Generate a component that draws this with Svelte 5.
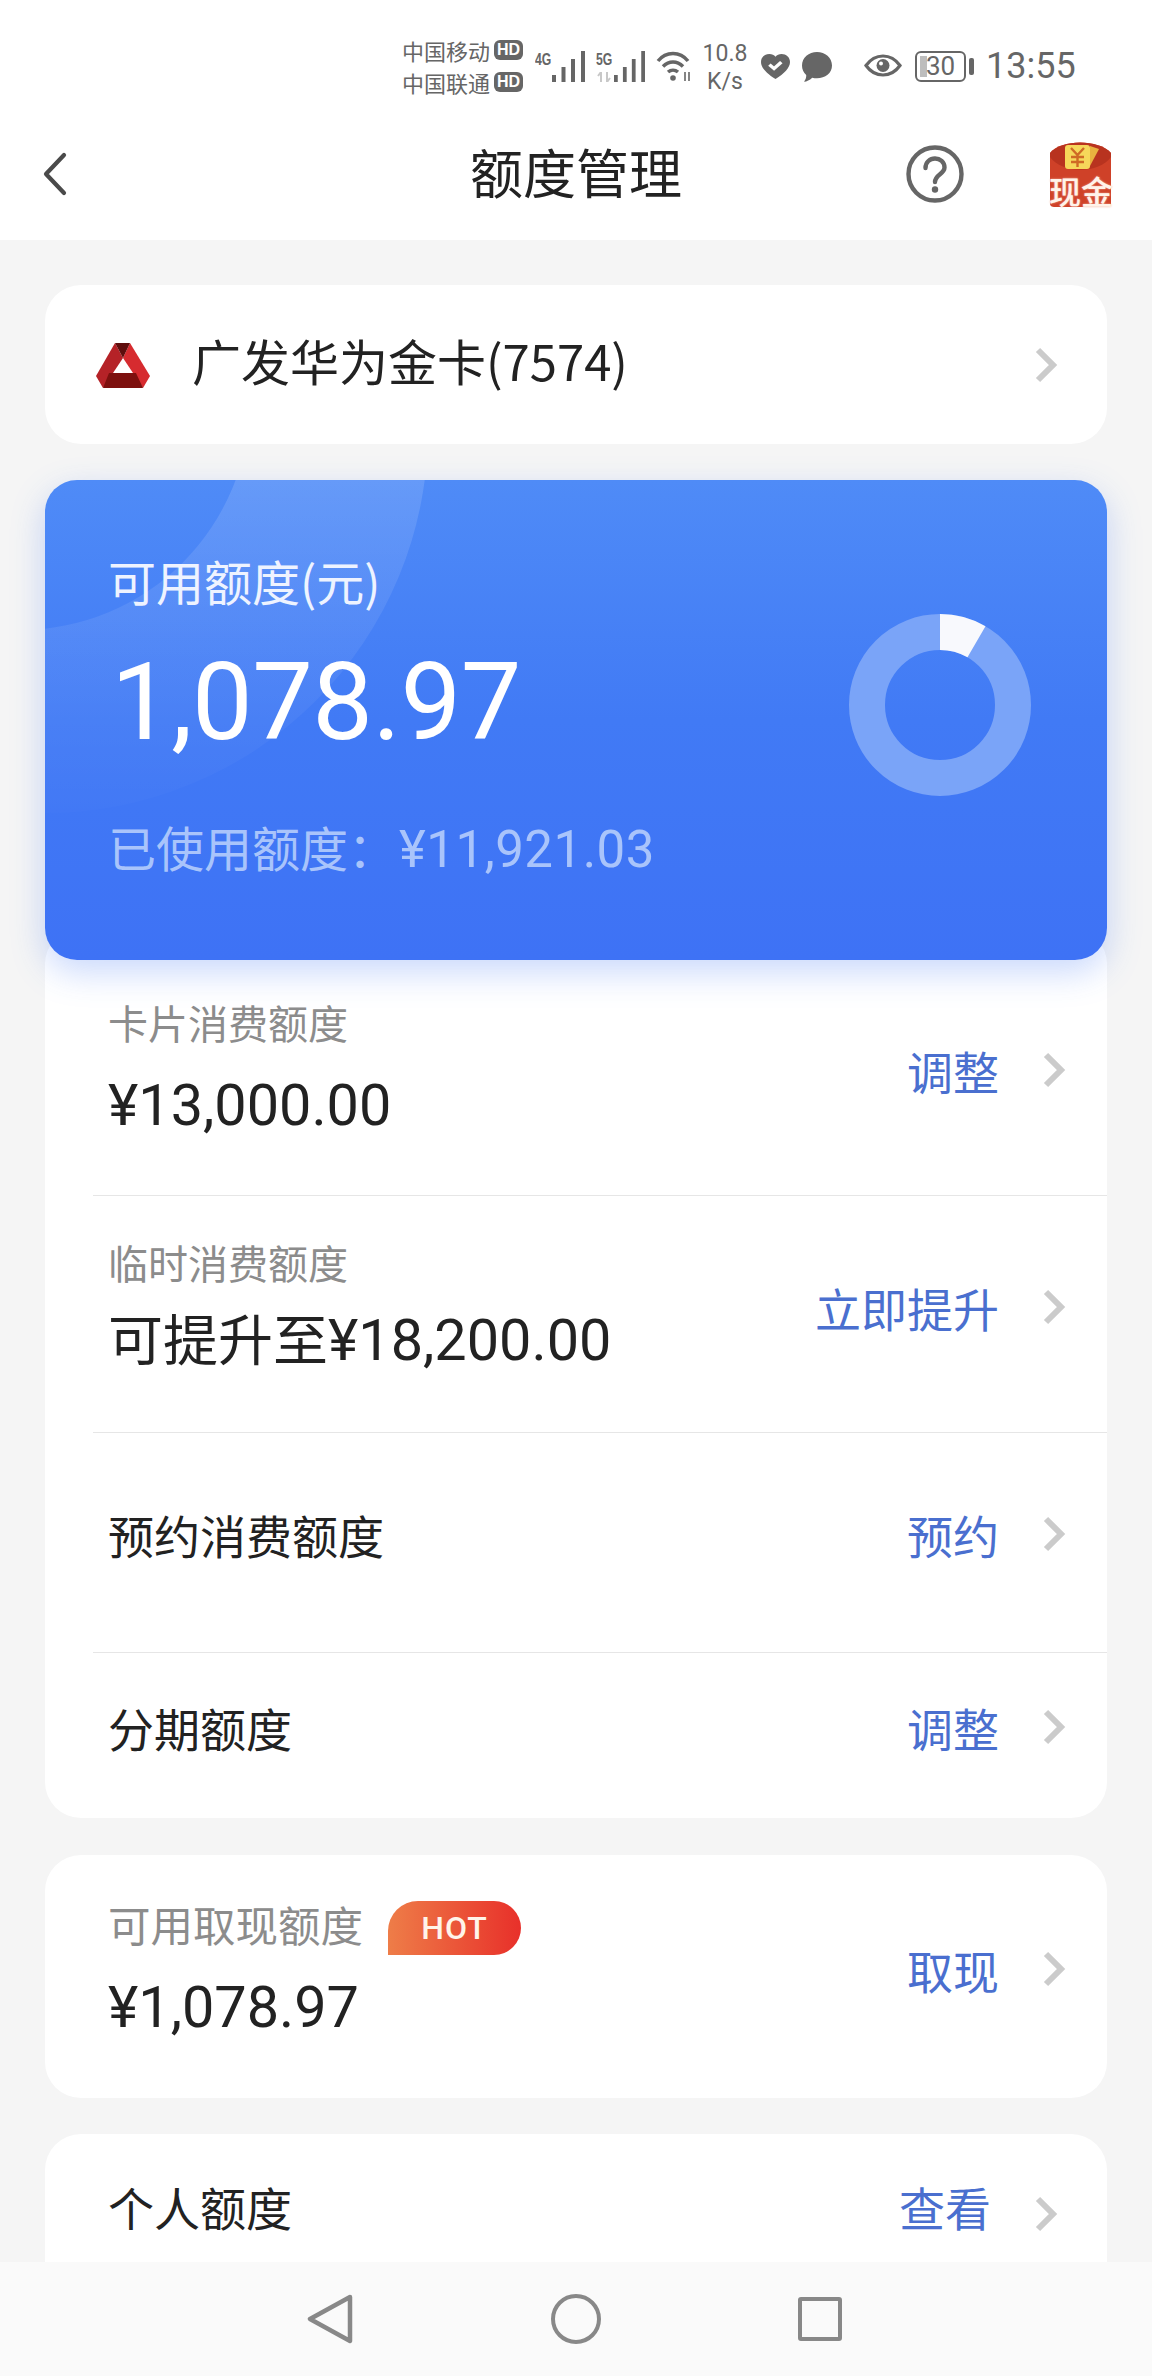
<script lang="ts">
type Row = {
  label: string;
  prefix?: string;
  value?: string;
  action: string;
  plain?: boolean;
  cls: string;
};

const rows: Row[] = [
  { label: '卡片消费额度', value: '¥13,000.00', action: '调整', cls: 'r1' },
  { label: '临时消费额度', prefix: '可提升至', value: '¥18,200.00', action: '立即提升', cls: 'r2' },
  { label: '预约消费额度', action: '预约', plain: true, cls: 'r3' },
  { label: '分期额度', action: '调整', plain: true, cls: 'r4' },
];

// donut slice: used share, drawn from 12 o'clock
function slice(cx: number, cy: number, r0: number, r1: number, deg: number) {
  const a = (deg * Math.PI) / 180;
  const sx = Math.sin(a);
  const cs = Math.cos(a);
  return `M${cx} ${cy - r1}A${r1} ${r1} 0 0 1 ${cx + r1 * sx} ${cy - r1 * cs}L${cx + r0 * sx} ${cy - r0 * cs}A${r0} ${r0} 0 0 0 ${cx} ${cy - r0}Z`;
}

function circle(cx: number, cy: number, r: number) {
  return `M${cx - r} ${cy}a${r} ${r} 0 1 0 ${r * 2} 0a${r} ${r} 0 1 0 ${-r * 2} 0Z`;
}
</script>

{#snippet chevron()}
	<svg class="chev" viewBox="0 0 24 36" aria-hidden="true">
		<path d="M3 3l15 15L3 33" fill="none" stroke="#cbcbcb" stroke-width="6" />
	</svg>
{/snippet}

{#snippet bars(w = 33)}
	<svg class="sig" style="width: {w}px" viewBox="0 0 33 31" preserveAspectRatio="none" aria-hidden="true">
		<g fill="#666">
			<rect x="0" y="24" width="4" height="7" />
			<rect x="9.500" y="16" width="4" height="15" />
			<rect x="19" y="8" width="4" height="23" />
			<rect x="29" y="0" width="4" height="31" />
		</g>
	</svg>
{/snippet}

<div class="screen">
	<div class="status">
		<div class="carriers">
			<div class="carrier">中国移动<span class="hd">HD</span></div>
			<div class="carrier">中国联通<span class="hd">HD</span></div>
		</div>
		<div class="net">
			<span class="g">4G</span>
			{@render bars(33)}
			<div class="g5">
				<span class="g">5G</span>
				<svg class="updown" viewBox="0 0 16 10" aria-hidden="true">
					<path d="M5 10V0L2 4M11 0v10l3-4" fill="none" stroke="#c8c8c8" stroke-width="2" />
				</svg>
			</div>
			{@render bars(31)}
		</div>
		<svg class="wifi" viewBox="0 0 35 30" aria-hidden="true">
			<g fill="none" stroke="#666" stroke-width="3.500">
				<path d="M2 10C10 0 24 0 32 10" />
				<path d="M7 15.500C13 9.500 21 9.500 27 15.500" />
				<path d="M12 21C15 18.500 19 18.500 22 21" />
			</g>
			<circle cx="17" cy="27" r="2.800" fill="#666" />
			<path d="M29 21v9M33 21v9" stroke="#666" stroke-width="1.600" />
		</svg>
		<div class="speed"><span>10.8</span><span>K/s</span></div>
		<svg class="heart" viewBox="0 0 20 20" preserveAspectRatio="none" aria-hidden="true">
			<path d="M10 20C4 15.500 0 11 0 6.300 0 2.500 2.700 0 5.800 0 7.600 0 9 .8 10 2.200 11 .8 12.400 0 14.200 0 17.300 0 20 2.500 20 6.300 20 11 16 15.500 10 20Z" fill="#666" />
			<path d="M5.800 8.500l3.200 3.200 5-5.200" fill="none" stroke="#fff" stroke-width="2.400" />
		</svg>
		<svg class="chat" viewBox="0 0 22 24" preserveAspectRatio="none" aria-hidden="true">
			<path d="M11 0C17 0 22 4.500 22 10.800 22 17 17 21 11 21 9.800 21 8.600 20.800 7.500 20.500 5.500 22.500 3.500 23.500 1.500 23.800 2.700 22 3.200 20.300 3.100 18.400 1.100 16.500 0 14 0 10.800 0 4.500 5 0 11 0Z" fill="#666" />
		</svg>
		<svg class="eye" viewBox="0 0 38 23" aria-hidden="true">
			<path d="M2 11.500C7 4.500 13 2 19 2S31 4.500 36 11.500C31 18.500 25 21 19 21S7 18.500 2 11.500Z" fill="none" stroke="#666" stroke-width="3.200" />
			<circle cx="19" cy="11.500" r="6.500" fill="#666" />
			<circle cx="17" cy="9.500" r="2" fill="#fff" />
		</svg>
		<div class="battery"><span class="level"></span><span class="pct">30</span></div>
		<span class="cap"></span>
		<span class="clock">13:55</span>
	</div>

	<header class="topbar">
		<button type="button" class="back" aria-label="返回">
			<svg viewBox="0 0 26 44" aria-hidden="true">
				<path d="M22 3L4 22l18 19" fill="none" stroke="#4a4a4a" stroke-width="4.200" stroke-linecap="round" stroke-linejoin="round" />
			</svg>
		</button>
		<h1>额度管理</h1>
		<svg class="help" viewBox="0 0 58 58" aria-hidden="true">
			<circle cx="29" cy="29" r="26.500" fill="none" stroke="#666" stroke-width="4.400" />
			<path d="M19.500 23C19.500 17 24 13.500 29 13.500S38.500 17 38.500 22.500C38.500 29 29 29.500 29 37" fill="none" stroke="#666" stroke-width="4.400" stroke-linecap="round" />
			<circle cx="29" cy="44.500" r="3.200" fill="#666" />
		</svg>
		<div class="packet">
			<svg viewBox="0 0 64 66" aria-hidden="true">
				<path d="M1 11C12 -3 50 -3 62 11V62C62 64 60 65 58 65H5C3 65 1 64 1 62Z" fill="#cf4128" />
				<path d="M1 11C12 -3 50 -3 62 11V15C50 32 13 32 1 15Z" fill="#b8331f" />
				<path d="M41 4l9 3-9 17Z" fill="#e9b23f" />
				<rect x="16" y="3" width="25" height="24" rx="3" fill="#f6d75a" />
				<path d="M22 6l6.500 7L35 6M28.500 13v12M22 15h13M22 20h13" fill="none" stroke="#cf6a25" stroke-width="2.400" />
			</svg>
			<span>现金</span>
		</div>
	</header>

	<main class="content">
		<section class="card bank">
			<svg class="logo" viewBox="0 0 54 45" aria-hidden="true">
				<path d="M34 0L54 33 47 45 27 15Z" fill="#d62b2f" />
				<path d="M19 0L0 33 7 45 27 15Z" fill="#b52227" />
				<path d="M19 0h15l-7 15Z" fill="#5e0d0c" />
				<path d="M13 30h27l7 15H7Z" fill="#7d100e" />
			</svg>
			<span class="bank-name">广发华为金卡(7574)</span>
			{@render chevron()}
		</section>

		<section class="quota">
			<svg class="glow" viewBox="0 0 1062 480" aria-hidden="true">
				<defs>
					<linearGradient id="glow-fade" gradientUnits="userSpaceOnUse" x1="0" y1="0" x2="0" y2="360">
						<stop offset="0" stop-color="#fff" stop-opacity="0.13" />
						<stop offset="1" stop-color="#fff" stop-opacity="0" />
					</linearGradient>
				</defs>
				<path d={circle(0, -50, 383) + circle(-25, -80, 230)} fill-rule="evenodd" fill="url(#glow-fade)" />
			</svg>
			<div class="quota-text">
				<div class="q-label">可用额度(元)</div>
				<div class="q-amount">1,078.97</div>
				<div class="q-used">已使用额度：<span>¥11,921.03</span></div>
			</div>
			<svg class="donut" viewBox="0 0 184 184" aria-hidden="true">
				<circle cx="92" cy="92" r="73" fill="none" stroke="#7aa4f8" stroke-width="36" />
				<path d={slice(92, 92, 55, 91, 30)} fill="#f8f9fd" />
			</svg>
		</section>

		<section class="card list">
			{#each rows as row}
				<div class="row {row.cls}">
					<div class="row-text">
						{#if row.plain}
							<div class="plain">{row.label}</div>
						{:else}
							<div class="label">{row.label}</div>
							<div class="value">{#if row.prefix}<span class="prefix">{row.prefix}</span>{/if}{row.value}</div>
						{/if}
					</div>
					<span class="action">{row.action}</span>
					{@render chevron()}
				</div>
			{/each}
		</section>

		<section class="card cash">
			<div class="row-text">
				<div class="label">可用取现额度<span class="hot">HOT</span></div>
				<div class="value">¥1,078.97</div>
			</div>
			<span class="action">取现</span>
			{@render chevron()}
		</section>

		<section class="card personal">
			<div class="row-text"><div class="plain">个人额度</div></div>
			<span class="action">查看</span>
			{@render chevron()}
		</section>
	</main>

	<nav class="navbar">
		<svg class="nav-back" viewBox="0 0 46 50" aria-hidden="true">
			<path d="M43 3L3 25l40 22Z" fill="none" stroke="#888" stroke-width="4.500" stroke-linejoin="round" />
		</svg>
		<span class="nav-home"></span>
		<span class="nav-recent"></span>
	</nav>
</div>

<style>
	:global(body) {
		margin: 0;
		background: #f5f5f5;
	}

	.screen {
		width: 1152px;
		height: 2376px;
		display: flex;
		flex-direction: column;
		overflow: hidden;
		background: #f5f5f5;
		font-family: 'Noto Sans CJK SC', 'Roboto', sans-serif;
		color: #222;
	}

	/* Status bar */
	.status {
		height: 120px;
		flex: none;
		box-sizing: border-box;
		padding: 34px 0 0 402px;
		display: flex;
		align-items: flex-start;
		background: #fff;
		color: #666;
	}

	.carriers {
		width: 123px;
		font-size: 22px;
		line-height: 32px;
		white-space: nowrap;
	}

	.carrier {
		display: flex;
		align-items: center;
		gap: 4px;
	}

	.hd {
		width: 29px;
		height: 20px;
		border-radius: 6px;
		background: #666;
		color: #fff;
		font: 700 16px/20px 'Liberation Sans', sans-serif;
		text-align: center;
	}

	.net {
		display: flex;
		align-items: flex-start;
		margin: 17px 0 0 10px;
		height: 31px;
	}

	.g {
		display: block;
		width: 17px;
		font: 700 17px/17px 'Liberation Sans', sans-serif;
		transform: scaleX(0.72);
		transform-origin: left;
		white-space: nowrap;
	}

	.g5 {
		width: 18px;
		height: 31px;
		margin-left: 11px;
		display: flex;
		flex-direction: column;
		justify-content: space-between;
	}

	.updown {
		display: block;
		width: 16px;
		height: 10px;
	}

	.sig {
		display: block;
		height: 31px;
		flex: none;
	}

	.wifi {
		width: 35px;
		height: 30px;
		margin: 17px 0 0 11px;
	}

	.speed {
		width: 48px;
		margin: 6px 0 0 10px;
		display: flex;
		flex-direction: column;
		align-items: center;
		font: 400 23px/28px 'Roboto', sans-serif;
	}

	.heart {
		width: 29px;
		height: 25px;
		margin: 20px 0 0 12px;
	}

	.chat {
		width: 30px;
		height: 30px;
		margin: 18px 0 0 12px;
	}

	.eye {
		width: 38px;
		height: 23px;
		margin: 20px 0 0 32px;
	}

	.battery {
		position: relative;
		width: 51px;
		height: 31px;
		box-sizing: border-box;
		margin: 17px 0 0 13px;
		border: 2.500px solid #666;
		border-radius: 6px;
		text-align: center;
		font: 400 26px/26px 'Roboto', sans-serif;
	}

	.level {
		position: absolute;
		left: 3px;
		top: 3px;
		bottom: 3px;
		width: 7px;
		background: #bdbdbd;
	}

	.pct {
		position: relative;
	}

	.cap {
		width: 5px;
		height: 17px;
		margin: 24px 0 0 3px;
		background: #666;
		border-radius: 2px;
	}

	.clock {
		margin: 12px 0 0 12px;
		font: 400 36px/40px 'Roboto', sans-serif;
	}

	/* Title bar */
	.topbar {
		height: 120px;
		flex: none;
		position: relative;
		display: flex;
		align-items: center;
		background: #fff;
	}

	.back {
		width: 26px;
		height: 44px;
		margin: -12px 0 0 42px;
		padding: 0;
		border: 0;
		background: none;
	}

	.back svg {
		display: block;
		width: 26px;
		height: 44px;
	}

	h1 {
		position: absolute;
		left: 0;
		right: 0;
		top: 16px;
		margin: 0;
		text-align: center;
		font-size: 53px;
		line-height: 70px;
		font-weight: 400;
		color: #222;
	}

	.help {
		width: 58px;
		height: 58px;
		margin: -13px 0 0 838px;
		position: relative;
	}

	.packet {
		position: relative;
		width: 64px;
		height: 66px;
		margin: -11px 0 0 85px;
	}

	.packet svg {
		display: block;
		width: 64px;
		height: 66px;
		overflow: visible;
	}

	.packet span {
		position: absolute;
		left: -1px;
		right: -1px;
		bottom: -2px;
		text-align: center;
		font-size: 32px;
		line-height: 40px;
		font-weight: 500;
		color: #fff3ea;
		text-shadow: 0 0 2px #f3b9a6;
		white-space: nowrap;
	}

	/* Content */
	.content {
		flex: 1;
		min-height: 0;
		overflow: hidden;
		padding: 45px 45px 0;
		display: flex;
		flex-direction: column;
	}

	.card {
		background: #fff;
		border-radius: 36px;
		flex: none;
	}

	.bank {
		height: 159px;
		display: flex;
		align-items: center;
		padding: 0 48px 0 51px;
	}

	.logo {
		width: 54px;
		height: 45px;
		margin-top: 2px;
	}

	.bank-name {
		flex: 1;
		margin: -9px 0 0 42px;
		font-size: 49px;
		line-height: 60px;
		color: #222;
	}

	.chev {
		width: 24px;
		height: 36px;
		flex: none;
	}

	.quota {
		position: relative;
		z-index: 1;
		height: 480px;
		flex: none;
		margin-top: 36px;
		border-radius: 32px;
		display: flex;
		background: linear-gradient(#4f8bf7, #417af5 50%, #3e72f5);
		box-shadow: 0 12px 34px rgba(62, 115, 245, 0.28);
		color: #fff;
	}

	.glow {
		position: absolute;
		inset: 0;
		width: 100%;
		height: 100%;
		border-radius: 32px;
	}

	.quota-text {
		position: relative;
		flex: 1;
		padding: 68px 0 0 63px;
	}

	.q-label {
		font-size: 48px;
		line-height: 64px;
		color: #eef3ff;
	}

	.q-amount {
		margin: 25px 0 0 3px;
		font: 400 108px/130px 'Roboto', sans-serif;
		letter-spacing: -0.5px;
	}

	.q-used {
		margin-top: 47px;
		font-size: 48px;
		line-height: 64px;
		color: #a9c4fb;
		white-space: nowrap;
	}

	.q-used span {
		font: 400 51px/64px 'Roboto', sans-serif;
		margin-left: 3px;
		letter-spacing: 0.5px;
	}

	.donut {
		position: relative;
		width: 184px;
		height: 184px;
		margin: 133px 75px 0 0;
		flex: none;
	}

	.list {
		margin-top: -32px;
		padding-top: 32px;
		height: 890px;
		box-sizing: border-box;
	}

	.row {
		display: flex;
		align-items: center;
		box-sizing: border-box;
		margin-left: 48px;
		padding: 0 40px 14px 15px;
		border-bottom: 1.500px solid #e6e6e6;
	}

	.r1 {
		height: 236px;
		padding-bottom: 16px;
	}

	.r2 {
		height: 237px;
		padding-bottom: 15px;
	}

	.r3 {
		height: 220px;
		padding-bottom: 18px;
	}

	.r4 {
		height: 165px;
		padding-bottom: 18px;
		border-bottom: 0;
	}

	.row-text {
		flex: 1;
		min-width: 0;
	}

	.label {
		display: flex;
		align-items: center;
		font-size: 40px;
		line-height: 56px;
		color: #8c8c8c;
	}

	.value {
		margin: 22px 0 6px;
		font: 400 57.600px/68px 'Roboto', 'Noto Sans CJK SC', sans-serif;
		color: #222;
		white-space: nowrap;
	}

	.r2 .value {
		margin: 12px 0 5px;
	}

	.prefix {
		font-family: 'Noto Sans CJK SC', sans-serif;
		font-size: 55px;
	}

	.plain {
		font-size: 46px;
		line-height: 60px;
		color: #222;
	}

	.action {
		font-size: 46px;
		line-height: 60px;
		color: #4a6fcf;
		margin-right: 44px;
	}

	.cash {
		margin-top: 37px;
		height: 243px;
		box-sizing: border-box;
		display: flex;
		align-items: center;
		padding: 0 40px 15px 63px;
	}

	.cash .label {
		font-size: 42.500px;
	}

	.cash .value {
		margin: 22px 0 0;
	}

	.hot {
		width: 133px;
		height: 54px;
		margin-left: 25px;
		border-radius: 30px 27px 27px 0;
		background: linear-gradient(90deg, #ee7d48, #e8302a);
		color: #fff4ea;
		font: 500 32px/54px 'Roboto', sans-serif;
		letter-spacing: 1px;
		text-align: center;
		transform: translateY(4px);
	}

	.personal {
		margin-top: 36px;
		height: 240px;
		box-sizing: border-box;
		display: flex;
		align-items: flex-start;
		padding: 42px 48px 0 63px;
	}

	.personal .chev {
		margin-top: 20px;
	}

	/* Navigation bar */
	.navbar {
		height: 114px;
		flex: none;
		position: relative;
		display: flex;
		align-items: center;
		background: #fafafa;
	}

	.nav-back {
		width: 46px;
		height: 50px;
		margin-left: 307px;
	}

	.nav-home {
		width: 50px;
		height: 50px;
		box-sizing: border-box;
		margin-left: 198px;
		border: 4.500px solid #888;
		border-radius: 50%;
	}

	.nav-recent {
		width: 44px;
		height: 44px;
		box-sizing: border-box;
		margin-left: 197px;
		border: 4.500px solid #888;
		border-radius: 3px;
	}
</style>
